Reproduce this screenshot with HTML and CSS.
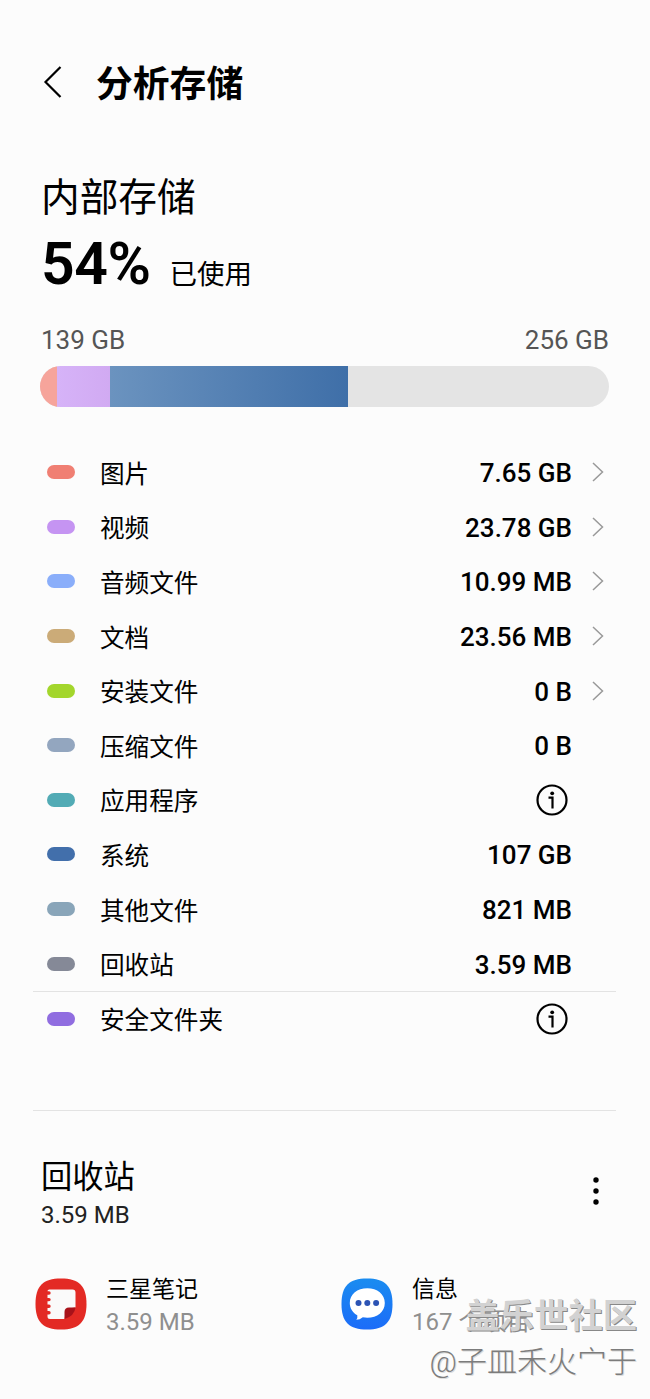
FILE: index.html
```
<!DOCTYPE html>
<html lang="zh-CN">
<head>
  <meta charset="UTF-8">
  <meta name="viewport" content="width=device-width, initial-scale=1.0">
  <title>分析存储</title>
  <link rel="stylesheet" href="styles.css">
</head>
<body>

<header class="top-bar">
  <svg class="back" viewBox="0 0 20 34"><path d="M17.5 2 2.5 17l15 15"/></svg>
  <h1>分析存储</h1>
</header>

<section class="summary">
  <h2>内部存储</h2>
  <div class="used">
    <span class="percent">54%</span>
    <span class="used-label">已使用</span>
  </div>
  <div class="sizes">
    <span>139 GB</span>
    <span>256 GB</span>
  </div>
  <div class="bar">
    <div class="bar-images"></div>
    <div class="bar-videos"></div>
    <div class="bar-system"></div>
  </div>
</section>

<!-- Categories -->
<ul class="list">
  <li><i class="chip images"></i><span class="name">图片</span><span class="value">7.65 GB</span><svg class="arrow" viewBox="0 0 12 20"><path d="m1 1 9.5 9L1 19"/></svg></li>
  <li><i class="chip videos"></i><span class="name">视频</span><span class="value">23.78 GB</span><svg class="arrow" viewBox="0 0 12 20"><path d="m1 1 9.5 9L1 19"/></svg></li>
  <li><i class="chip audio"></i><span class="name">音频文件</span><span class="value">10.99 MB</span><svg class="arrow" viewBox="0 0 12 20"><path d="m1 1 9.5 9L1 19"/></svg></li>
  <li><i class="chip docs"></i><span class="name">文档</span><span class="value">23.56 MB</span><svg class="arrow" viewBox="0 0 12 20"><path d="m1 1 9.5 9L1 19"/></svg></li>
  <li><i class="chip apk"></i><span class="name">安装文件</span><span class="value">0 B</span><svg class="arrow" viewBox="0 0 12 20"><path d="m1 1 9.5 9L1 19"/></svg></li>
  <li><i class="chip zip"></i><span class="name">压缩文件</span><span class="value">0 B</span></li>
  <li><i class="chip apps"></i><span class="name">应用程序</span><svg class="info" viewBox="0 0 32 32"><circle cx="16" cy="16" r="14.5"/><path d="M12.5 13.6h4v10.8"/><circle class="dot" cx="16.2" cy="9.3" r="1.9"/></svg></li>
  <li><i class="chip system"></i><span class="name">系统</span><span class="value">107 GB</span></li>
  <li><i class="chip other"></i><span class="name">其他文件</span><span class="value">821 MB</span></li>
  <li><i class="chip trash"></i><span class="name">回收站</span><span class="value">3.59 MB</span></li>
  <li class="secure"><i class="chip folder"></i><span class="name">安全文件夹</span><svg class="info" viewBox="0 0 32 32"><circle cx="16" cy="16" r="14.5"/><path d="M12.5 13.6h4v10.8"/><circle class="dot" cx="16.2" cy="9.3" r="1.9"/></svg></li>
</ul>

<!-- Recycle bin -->
<section class="bin">
  <div class="bin-head">
    <div>
      <h3>回收站</h3>
      <p>3.59 MB</p>
    </div>
    <svg class="more" viewBox="0 0 6 28"><circle cx="3" cy="3" r="2.7"/><circle cx="3" cy="14" r="2.7"/><circle cx="3" cy="25" r="2.7"/></svg>
  </div>
  <div class="apps-grid">
    <div class="app">
      <svg class="app-icon" viewBox="0 0 52 52">
        <path fill="#e32a24" d="M26 .5C44 .5 51.5 8 51.5 26S44 51.5 26 51.5.5 44 .5 26 8 .5 26 .5z"/>
        <path fill="#fafafa" d="M14.5 11.500h23q3 0 3 3v15q-10-.5-11 11.500H15q-2.500 0-2.500-2.500v-2h1.500a1.700 1.700 0 0 0 0-3.400h-1.500v-3.200h1.500a1.700 1.700 0 0 0 0-3.400h-1.500v-3.200h1.500a1.700 1.700 0 0 0 0-3.400h-1.500v-3.200h1.500a1.700 1.700 0 0 0 0-3.400h-1.500q-.2-1.800 2-1.800z"/>
        <path fill="#a8121a" d="M29.5 41V34q0-4.500 4.500-4.500h6.500q-1 8.500-11 11.500z"/>
      </svg>
      <div>
        <p class="app-name">三星笔记</p>
        <p class="app-size">3.59 MB</p>
      </div>
    </div>
    <div class="app">
      <svg class="app-icon" viewBox="0 0 52 52">
        <defs>
          <linearGradient id="blue" x1="0" y1="0" x2="0" y2="1">
            <stop offset="0" stop-color="#1a8cf0"/>
            <stop offset="1" stop-color="#1c6cf8"/>
          </linearGradient>
        </defs>
        <path fill="url(#blue)" d="M26 .5C44 .5 51.5 8 51.5 26S44 51.5 26 51.5.5 44 .5 26 8 .5 26 .5z"/>
        <path fill="#fff" d="M26.3 10.300c10 0 17.500 6 17.500 14.700s-7.500 14.800-17.500 14.800c-1.500 0-3-.2-4.500-.5q-3 2.500-6.500 2.500 1.500-2 1-4.500C11.500 34.500 8.800 30.300 8.800 25c0-8.700 7.500-14.700 17.500-14.700z"/>
        <g fill="#2c53b4"><circle cx="17.5" cy="25" r="3"/><circle cx="26.3" cy="25" r="3"/><circle cx="35.1" cy="25" r="3"/></g>
      </svg>
      <div>
        <p class="app-name">信息</p>
        <p class="app-size">167 个项目</p>
      </div>
    </div>
  </div>
</section>

<div class="watermark">
  <div class="community">盖乐世社区</div>
  <div class="author">@子皿禾火宀于</div>
</div>

</body>
</html>
```
FILE: styles.css
```
* {
  box-sizing: border-box;
}

body {
  font-family: Roboto, "Noto Sans CJK SC", sans-serif;
  margin: 0;
  height: 1399px;
  position: relative;
  overflow: hidden;
  background-color: #fcfcfc;
  color: #000;
}

h1, h2, h3, p, ul {
  margin: 0;
  padding: 0;
  font-weight: 400;
}

.top-bar {
  display: flex;
  align-items: center;
  height: 164px;
  padding-left: 43px;
}

.back {
  width: 20px;
  height: 34px;
  margin-right: 33px;
  fill: none;
  stroke: #000;
  stroke-width: 2.2;
}

.top-bar h1 {
  font-size: 36.8px;
  line-height: 50px;
  font-weight: 700;
  padding-top: 5px;
}

.summary {
  padding: 8px 41px 0 41px;
}

.summary h2 {
  font-size: 38.7px;
  line-height: 52px;
}

.used {
  display: flex;
  align-items: baseline;
  gap: 19px;
  height: 82px;
  line-height: 80px;
}

.percent {
  font-size: 59px;
  font-weight: 600;
  letter-spacing: -0.5px;
}

.used-label {
  font-size: 27.5px;
}

.sizes {
  display: flex;
  justify-content: space-between;
  margin-top: 18px;
  font-size: 26px;
  line-height: 32px;
  color: #555;
}

.bar {
  display: flex;
  height: 41px;
  margin: 10px 0 0 -1px;
  border-radius: 21px;
  overflow: hidden;
  background-color: #e4e4e4;
}

.bar-images {
  width: 17px;
  background-color: #f6a49b;
}

.bar-videos {
  width: 53px;
  background: linear-gradient(to right, #d6b3f8, #d1aaf2);
}

.bar-system {
  width: 238px;
  background: linear-gradient(to right, #6b93bf, #3f6fa8);
}

.list {
  list-style: none;
  margin: 38px 34px 0 33px;
}

.list li {
  display: flex;
  align-items: center;
  height: 54.6px;
  padding: 0 12px 0 14px;
  line-height: 36px;
}

.chip {
  width: 28px;
  height: 14px;
  border-radius: 7px;
  margin-right: 25px;
}

.images { background-color: #f07f73; }
.videos { background-color: #c594f2; }
.audio { background-color: #8aaefa; }
.docs { background-color: #cbab78; }
.apk { background-color: #a3d62c; }
.zip { background-color: #93a6bf; }
.apps { background-color: #52abb5; }
.system { background-color: #426fab; }
.other { background-color: #89a5b9; }
.trash { background-color: #858997; }
.folder { background-color: #906de0; }

.name {
  flex: 1;
  font-size: 24.6px;
  padding-top: 5px;
}

.value {
  font-size: 26px;
  font-weight: 500;
  margin-right: 32px;
  padding-top: 2px;
}

.arrow {
  width: 12px;
  height: 20px;
  margin-left: -12px;
  fill: none;
  stroke: #999;
  stroke-width: 1.5;
}

.info {
  width: 32px;
  height: 32px;
  margin-right: 36px;
  fill: none;
  stroke: #000;
  stroke-width: 2.2;
}

.info .dot {
  fill: #000;
  stroke: none;
}

.list .secure {
  border-top: 1px solid #e3e3e3;
}

.bin {
  margin: 64px 34px 0 33px;
  border-top: 1px solid #e3e3e3;
}

.bin-head {
  display: flex;
  justify-content: space-between;
  padding: 45px 17px 0 8px;
}

.bin-head h3 {
  font-size: 31.3px;
  line-height: 44px;
}

.bin-head p {
  font-size: 24px;
  line-height: 30px;
  color: #222;
}

.more {
  width: 6px;
  height: 28px;
  margin-top: 21px;
}

.apps-grid {
  display: grid;
  grid-template-columns: 306px 1fr;
  margin: 44px 0 0 2px;
}

.app {
  display: flex;
  gap: 19px;
}

.app-icon {
  width: 52px;
  height: 52px;
  margin-top: 4px;
}

.app-name {
  font-size: 23px;
  line-height: 32px;
}

.app-size {
  font-size: 24px;
  line-height: 32px;
  color: #8f8f8f;
}

/* Community stamp over the bottom corner */
.watermark {
  position: absolute;
  right: 13px;
  bottom: 16px;
  text-align: right;
}

.community {
  font-size: 34.3px;
  line-height: 46px;
  margin-bottom: 2px;
  font-weight: 700;
  color: #d2d2d2;
  text-shadow: 1px 1px 0 #888;
}

.author {
  font-size: 30px;
  font-weight: 300;
  line-height: 42px;
  color: #7c7c7c;
  text-shadow: 1px 1px 0 #ddd;
}
```
